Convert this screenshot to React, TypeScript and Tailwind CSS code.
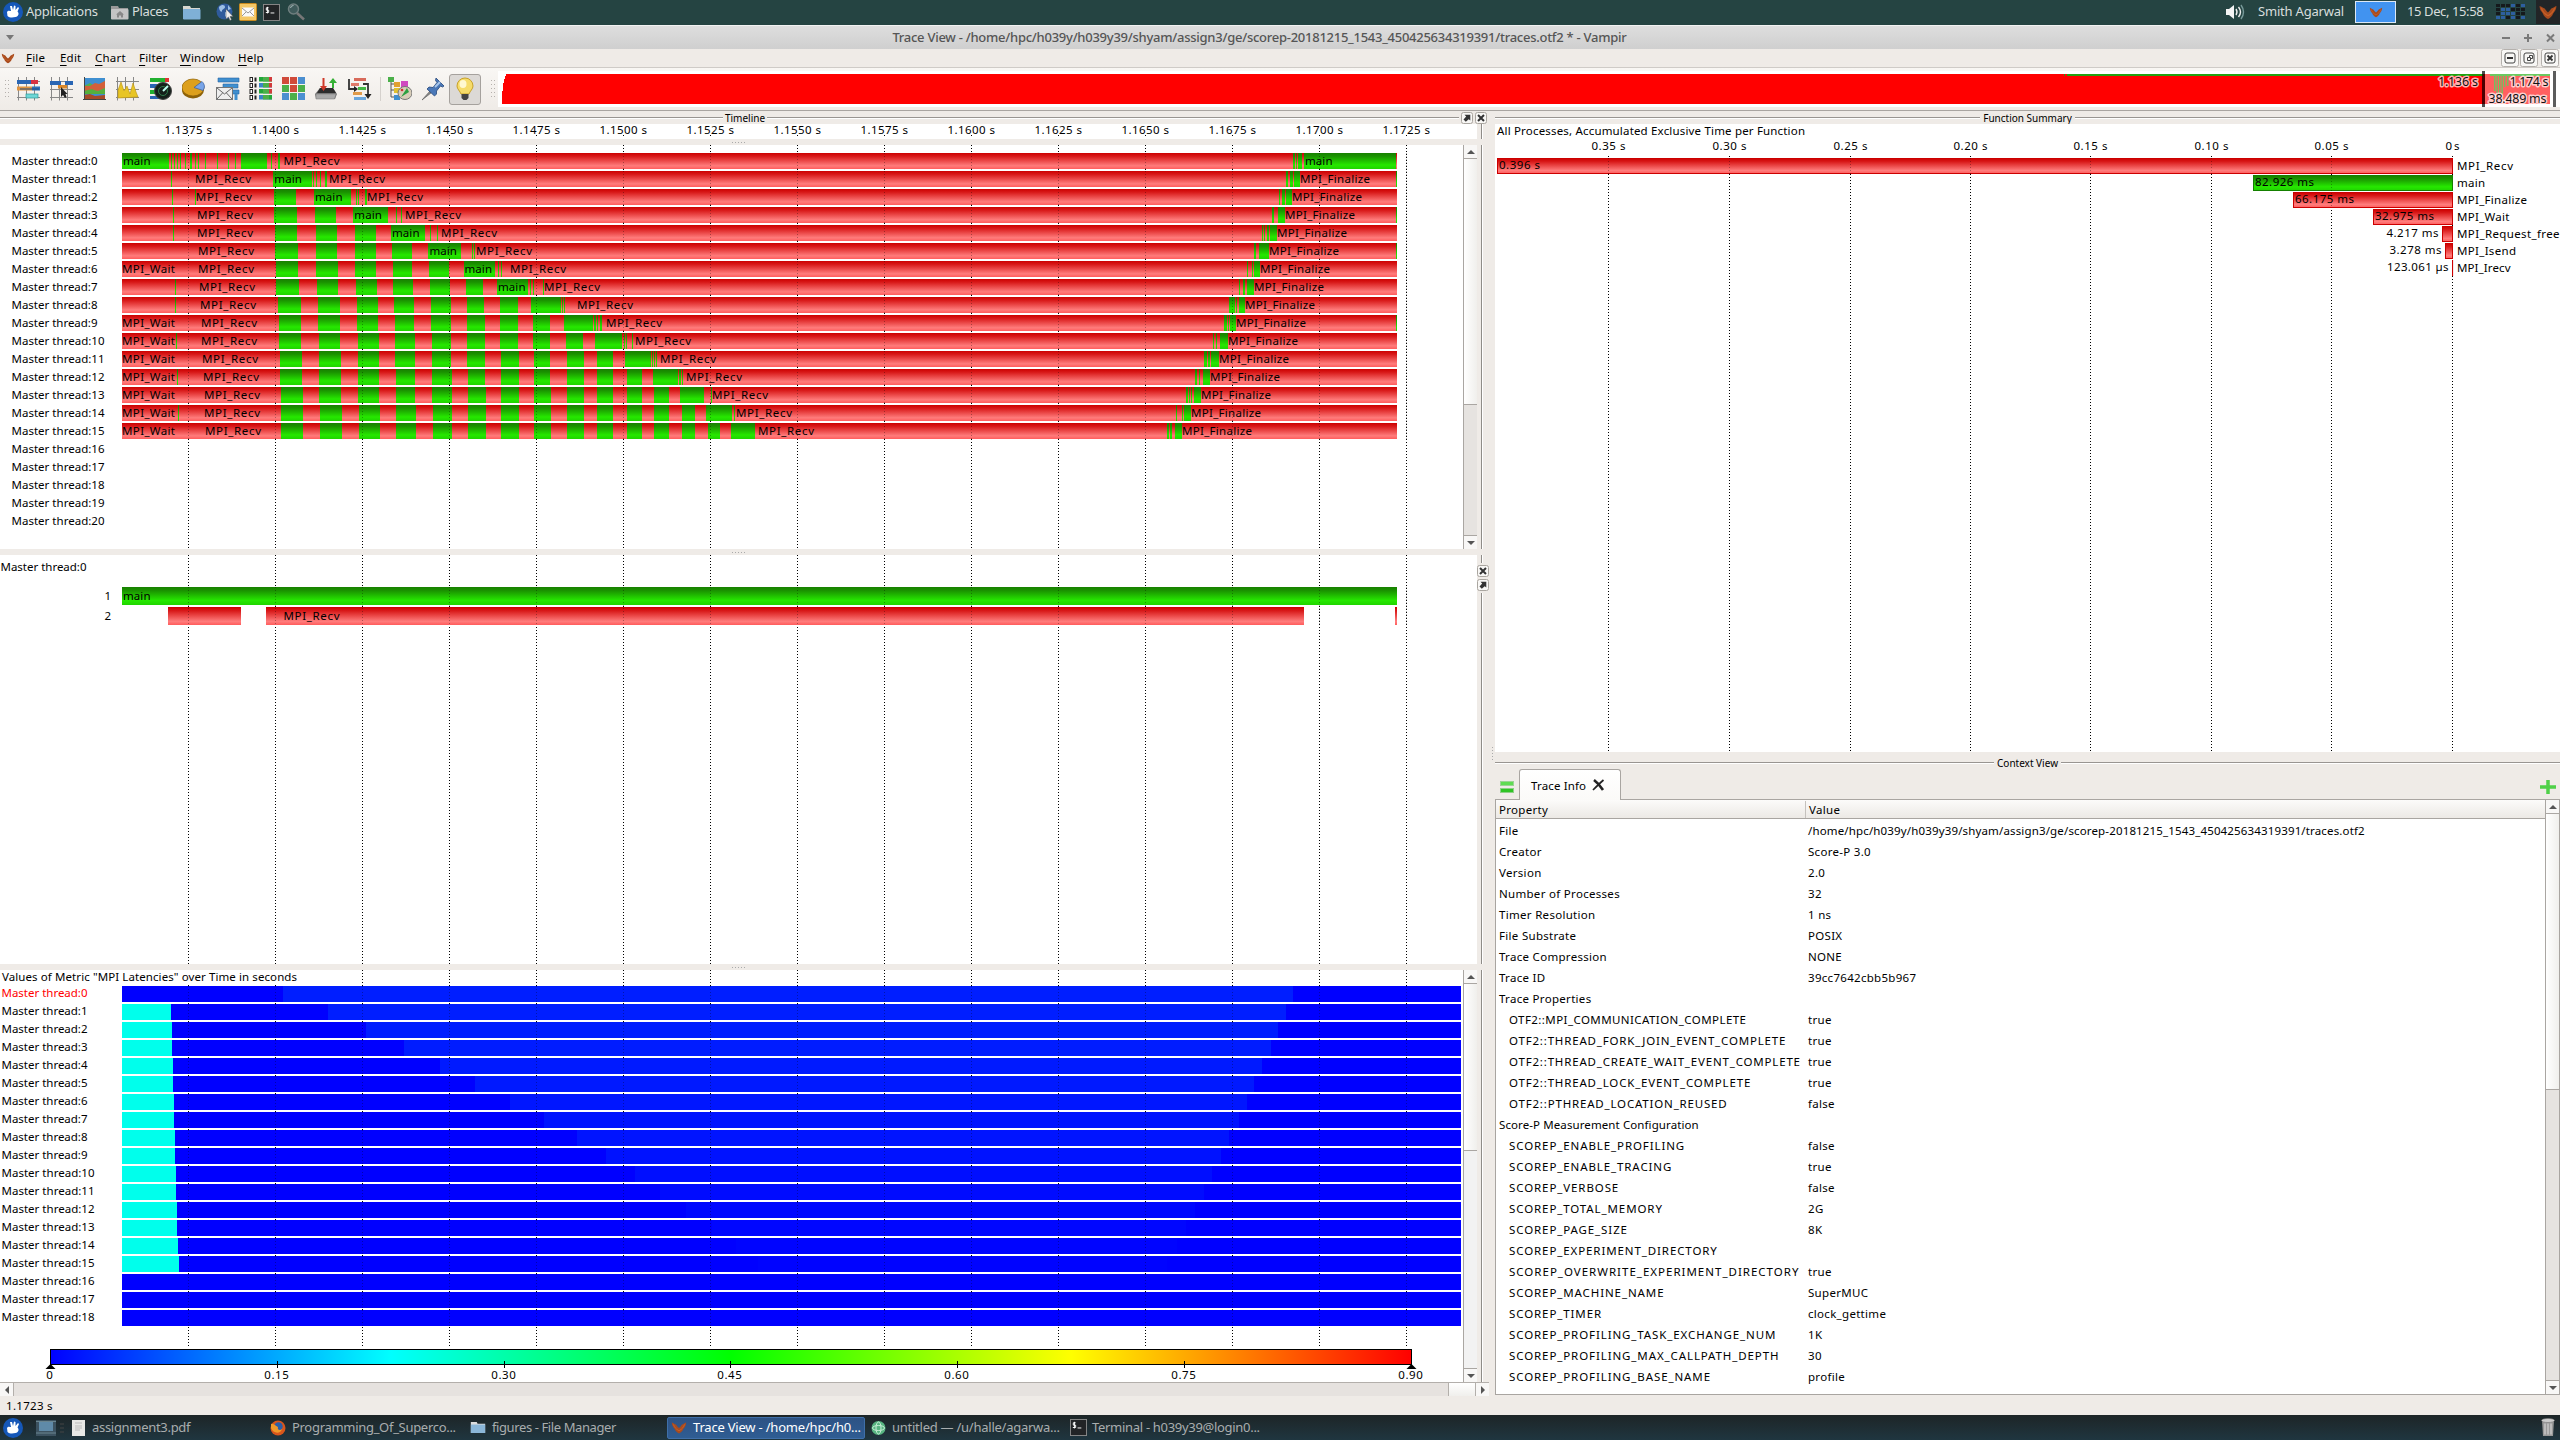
import React from 'react';

const UI = "font-['Noto_Sans',sans-serif]";
const GRID = Array.from({ length: 15 }, (_, i) => 188.5 + 87 * i);
const TIMES = Array.from({ length: 15 }, (_, i) => (1.1375 + 0.0025 * i).toFixed(4) + ' s');

type Span = [number, number];
type Mark = [number, string];

/* green spans and labels of every process row, in plot pixels */
const COLUMNS: [Span, Span][] = [
  [[273.5, 296], [281.5, 303.5]],
  [[315, 336], [320, 342]],
  [[354, 375], [359, 380]],
  [[391, 411], [396.5, 416]],
  [[428, 448], [433, 452.5]],
  [[464, 482], [468.5, 486]],
  [[499, 517], [501, 519]],
  [[531, 548], [534.5, 551]],
  [[565, 582], [567, 584]],
  [[596, 612], [597.5, 613]],
  [[625, 640], [627.5, 642]],
  [[654, 668], [654.5, 669]],
  [[681.5, 695], [681.5, 695.5]],
  [[707.5, 720], [707.5, 720]],
];

const MAIN: Span[] = [
  [122, 169], [273.3, 312], [314, 351], [353.3, 388], [391, 425], [428.4, 460.6], [463.5, 495], [497, 527.5],
  [531, 561.4], [564, 593.3], [595, 621.8], [625, 651], [653, 678], [680, 704], [706, 732.4], [731, 755],
];

const SLIVERS: Span[][] = [
  [[171, 172], [174, 175], [177, 178], [179.5, 181], [185, 186.2], [190, 192], [195, 196], [198, 199.3], [205, 206], [217, 218], [228, 229], [235, 236], [241.3, 267], [271, 272], [278, 280], [1293, 1295], [1296, 1297], [1298, 1302.3], [1304, 1395.5]],
  [[171, 172], [313, 314], [315.5, 316.5], [320, 321.2], [325, 327], [1286, 1288], [1290, 1293.3], [1294, 1299.7], [1396, 1397]],
  [[172, 173], [194.5, 196], [356, 357.2], [358.2, 359.3], [365, 367], [1279, 1280], [1282.3, 1285.3], [1286, 1291.7]],
  [[173, 174], [396, 397], [401, 402], [1272.3, 1274], [1278, 1284.7], [1396, 1397]],
  [[173, 174], [429.7, 430.6], [437, 438], [1262, 1263], [1264, 1265], [1267.3, 1269], [1270, 1277]],
  [[472, 473], [474, 475], [1254, 1255.7], [1259.3, 1269], [1396, 1397]],
  [[498, 499], [500.6, 501.6], [1247, 1248], [1252, 1253], [1253.7, 1259.7]],
  [[175, 176], [530, 531], [533, 534], [539.5, 540.3], [541.5, 542.3], [543, 544], [1239, 1240], [1243.3, 1245.3], [1247.3, 1253.7]],
  [[175, 176], [562, 563], [564, 565], [1229.3, 1235], [1236, 1237], [1239.3, 1245]],
  [[593.5, 595.5], [597, 598.2], [600, 601.5], [1224, 1227.3], [1228, 1229], [1230, 1235.7], [1396, 1397]],
  [[176, 177], [624, 625], [626, 627], [632, 633], [1213, 1214], [1216, 1217], [1220, 1227.7]],
  [[652, 653], [654, 655], [656, 657], [1204, 1207], [1208, 1210], [1211.3, 1219]],
  [[177, 178.3], [679.4, 680.5], [681.8, 683], [1195.3, 1197], [1199, 1200], [1203.3, 1210]],
  [[711, 712], [1186, 1188], [1189, 1190], [1191, 1192], [1194, 1201]],
  [[178, 179], [733.5, 734.5], [1176, 1177], [1182, 1183], [1183.7, 1191]],
  [[1167.3, 1169], [1170, 1171.7], [1175.3, 1181.7]],
];

const RECV1 = [0, 195, 195.8, 197, 197, 198, 198, 199, 200, 201, 201, 202, 203, 204, 204, 205];
const RECV2 = [283.5, 329, 367, 405, 441, 476, 510, 544, 577, 606, 635, 660, 686, 712, 736, 758];
const FINAL = [0, 1300, 1292, 1285, 1277, 1269, 1260, 1254, 1245, 1236, 1228, 1219, 1210, 1201, 1191, 1182];

function greens(row: number): Span[] {
  const spans: Span[] = [MAIN[row], ...SLIVERS[row]];
  const t = row >= 8 ? 0.6 + (row - 8) * 0.057 : Math.max(0, (row - 2) * 0.07);
  for (let c = 0; c < row - 1; c++) {
    const [a, b] = COLUMNS[c];
    spans.push([a[0] + (b[0] - a[0]) * t, a[1] + (b[1] - a[1]) * t]);
  }
  return spans;
}

function labels(row: number): Mark[] {
  if (row === 0) return [[123, 'main'], [283.5, 'MPI_Recv'], [1305, 'main']];
  const out: Mark[] = [[RECV1[row], 'MPI_Recv'], [RECV2[row], 'MPI_Recv'], [FINAL[row], 'MPI_Finalize']];
  if (row < 8) out.push([MAIN[row][0] + 1, 'main']);
  if (row === 6 || row > 8) out.push([122, 'MPI_Wait']);
  return out;
}

const LEN: Record<string, number> = { main: 27.5, MPI_Recv: 56, MPI_Finalize: 70, MPI_Wait: 53 };

function Label({ x, y, children, len, fill = '#000', anchor }: { x: number; y: number; children: string; len?: number; fill?: string; anchor?: 'middle' | 'end' }) {
  return (
    <text x={x} y={y} fontSize={11.5} fill={fill} textLength={len} textAnchor={anchor} className={UI}>
      {children}
    </text>
  );
}

function Dots({ y1, y2, xs = GRID, opacity = 1 }: { y1: number; y2: number; xs?: number[]; opacity?: number }) {
  return (
    <g opacity={opacity}>
      {xs.map((x) => (
        <line key={x} x1={x} x2={x} y1={y1} y2={y2} stroke="#000" strokeDasharray="1 2" />
      ))}
    </g>
  );
}

function Gradients() {
  return (
    <svg className="absolute size-0">
      <defs>
        <linearGradient id="red" x1="0" y1="0" x2="0" y2="1">
          <stop offset="0" stopColor="#cc0000" />
          <stop offset="0.2" stopColor="#d81818" />
          <stop offset="0.8" stopColor="#ff7c7c" />
          <stop offset="1" stopColor="#ff5c5c" />
        </linearGradient>
        <linearGradient id="green" x1="0" y1="0" x2="0" y2="1">
          <stop offset="0" stopColor="#178000" />
          <stop offset="0.2" stopColor="#1a9200" />
          <stop offset="0.75" stopColor="#26e800" />
          <stop offset="1" stopColor="#20d400" />
        </linearGradient>
        <linearGradient id="rainbow">
          <stop offset="0" stopColor="#0000ff" />
          <stop offset="0.25" stopColor="#00ffff" />
          <stop offset="0.5" stopColor="#00ff00" />
          <stop offset="0.75" stopColor="#ffff00" />
          <stop offset="1" stopColor="#ff0000" />
        </linearGradient>
      </defs>
    </svg>
  );
}

function Ruler() {
  return (
    <svg className="h-[15px] w-[1477px] bg-white" viewBox="0 124 1477 15">
      <Dots y1={135} y2={138} />
      {TIMES.map((t, i) => (
        <Label key={t} x={GRID[i] - 0.3} y={134.3} len={47.5} anchor="middle">{t}</Label>
      ))}
    </svg>
  );
}

function MasterTimeline() {
  return (
    <svg className="h-[404px] w-[1463px] bg-white" viewBox="0 145 1463 404">
      <Dots y1={145} y2={549} />
      {Array.from({ length: 21 }, (_, r) => (
        <Label key={r} x={11.5} y={165 + 18 * r} len={r > 9 ? 93 : 86}>{`Master thread:${r}`}</Label>
      ))}
      <g shapeRendering="crispEdges">
        {Array.from({ length: 16 }, (_, r) => (
          <g key={r}>
            <rect x={122} y={153 + 18 * r} width={1275} height={16} fill="url(#red)" />
            {greens(r).map(([a, b], i) => (
              <rect key={i} x={a} y={153 + 18 * r} width={b - a} height={16} fill="url(#green)" />
            ))}
          </g>
        ))}
      </g>
      <Dots y1={153} y2={440} opacity={0.3} />
      {Array.from({ length: 16 }, (_, r) =>
        labels(r).map(([x, s], i) => (
          <Label key={`${r}-${i}`} x={x} y={164.5 + 18 * r} len={LEN[s]}>{s}</Label>
        )),
      )}
    </svg>
  );
}

function ProcessTimeline() {
  return (
    <svg className="h-[409px] w-[1477px] bg-white" viewBox="0 555 1477 409">
      <Dots y1={555} y2={964} />
      <Label x={0.5} y={570.5} len={86}>Master thread:0</Label>
      <Label x={104.5} y={600}>1</Label>
      <Label x={104.5} y={620}>2</Label>
      <g shapeRendering="crispEdges">
        <rect x={122} y={587} width={1275} height={18} fill="url(#green)" />
        <rect x={168} y={607} width={73} height={18} fill="url(#red)" />
        <rect x={266} y={607} width={1038} height={18} fill="url(#red)" />
        <rect x={1395} y={607} width={2} height={18} fill="url(#red)" />
      </g>
      <Dots y1={587} y2={625} opacity={0.3} />
      <Label x={123} y={600} len={27.5}>main</Label>
      <Label x={283.5} y={620} len={56}>MPI_Recv</Label>
    </svg>
  );
}

const LATENCY_START = [283, 328, 366, 404, 440, 475, 510, 544, 577, 606, 635, 660, 686, 712, 736, 758];
const LATENCY_END = [1293, 1286, 1278, 1271, 1262, 1254, 1247, 1239, 1229, 1221, 1212, 1204, 1195, 1186, 1177, 1167];
const LATENCY_FILL = ['#001eff', '#001eff', '#001eff', '#001cff', '#001aff', '#0019ff', '#0016ff', '#0014ff', '#0014ff', '#0012ff', '#000eff', '#000bff', '#0008ff', '#0006ff', '#0004ff', '#0003ff'];

function MetricChart() {
  return (
    <svg className="h-[412px] w-[1463px] bg-white" viewBox="0 970 1463 412">
      <Dots y1={970} y2={1348} />
      <rect x={0} y={970} width={299} height={15} fill="#fff" />
      <Label x={2} y={980.5} len={295}>Values of Metric "MPI Latencies" over Time in seconds</Label>
      {Array.from({ length: 19 }, (_, r) => (
        <Label key={r} x={1.5} y={997.2 + 18 * r} len={r > 9 ? 93 : 86} fill={r === 0 ? '#ff0000' : '#000'}>{`Master thread:${r}`}</Label>
      ))}
      <g shapeRendering="crispEdges">
        {Array.from({ length: 19 }, (_, r) => (
          <g key={r}>
            <rect x={122} y={986 + 18 * r} width={1339} height={16} fill="#0000ff" />
            {r > 0 && r < 16 && <rect x={122} y={986 + 18 * r} width={49 + Math.floor(r / 2) + (r === 15 ? 1 : 0)} height={16} fill="#00ffec" />}
            {r < 16 && <rect x={LATENCY_START[r]} y={986 + 18 * r} width={LATENCY_END[r] - LATENCY_START[r]} height={16} fill={LATENCY_FILL[r]} />}
          </g>
        ))}
      </g>
      <Dots y1={986} y2={1326} opacity={0.3} />
      <rect x={50.5} y={1349.5} width={1361} height={15} fill="url(#rainbow)" stroke="#000" />
      {[0, 1, 2, 3, 4, 5, 6].map((i) => {
        const x = 50.5 + Math.round(226.8 * i);
        const edge = i === 0 || i === 6;
        return (
          <g key={i}>
            {edge ? <path d={`M${x} 1364l5 5h-10z`} fill="#000" /> : <line x1={x} x2={x} y1={1361} y2={1368} stroke="#000" />}
            <Label x={x - 1} y={1378.5} anchor="middle" len={i ? 24.5 : undefined}>{i ? (0.15 * i).toFixed(2) : '0'}</Label>
          </g>
        );
      })}
    </svg>
  );
}

const FUNCS: [number, string, string, number, number][] = [
  [1497, '0.396 s', 'MPI_Recv', 41, 56],
  [2253, '82.926 ms', 'main', 59, 28],
  [2293, '66.175 ms', 'MPI_Finalize', 59, 70],
  [2373, '32.975 ms', 'MPI_Wait', 59, 52.5],
  [2442, '4.217 ms', 'MPI_Request_free', 52, 102.5],
  [2445, '3.278 ms', 'MPI_Isend', 52, 59],
  [2452, '123.061 µs', 'MPI_Irecv', 61.5, 53.5],
];

function FunctionSummary() {
  const xs = [1608.5, 1729.5, 1850.5, 1970.5, 2090.5, 2211.5, 2331.5, 2452.5];
  const names = ['0.35 s', '0.30 s', '0.25 s', '0.20 s', '0.15 s', '0.10 s', '0.05 s', '0s'];
  return (
    <svg className="h-[628px] w-[1065px] bg-white" viewBox="1495 124 1065 628">
      <Label x={1497} y={134.5} len={308}>All Processes, Accumulated Exclusive Time per Function</Label>
      {xs.map((x, i) => (
        <Label key={x} x={x} y={150.3} anchor="middle" len={i < 7 ? 34 : 14}>{names[i]}</Label>
      ))}
      <Dots xs={xs} y1={156} y2={752} />
      {FUNCS.map(([x, , name], i) => (
        <rect key={name} x={x + 0.5} y={158.5 + 17 * i} width={Math.max(0.1, 2452 - x)} height={15} fill={i === 1 ? 'url(#green)' : 'url(#red)'} stroke={i === 1 ? '#158000' : '#cc0000'} />
      ))}
      <Dots xs={xs.slice(0, 7)} y1={158} y2={174} opacity={0.3} />
      <Dots xs={[2331.5]} y1={175} y2={208} opacity={0.3} />
      {FUNCS.map(([x, value, name, vl, nl], i) => (
        <g key={name}>
          <Label x={i < 4 ? x + 2 : x - 3.5} y={168.5 + 17 * i} len={vl} anchor={i < 4 ? undefined : 'end'}>{value}</Label>
          <Label x={2457} y={169.5 + 17 * i} len={nl}>{name}</Label>
        </g>
      ))}
    </svg>
  );
}

function Arrow({ dir }: { dir: 'up' | 'down' | 'left' | 'right' }) {
  const d = { up: 'M0 4h8L4 0z', down: 'M0 0h8L4 4z', left: 'M4 0v8L0 4z', right: 'M0 0v8l4-4z' }[dir];
  return (
    <svg width={dir === 'up' || dir === 'down' ? 8 : 4} height={dir === 'up' || dir === 'down' ? 4 : 8}>
      <path d={d} fill="#555" />
    </svg>
  );
}

function VScroll({ height, thumb, trough = 'bg-[#e6e3e0]' }: { height: string; thumb: string; trough?: string }) {
  return (
    <div className={`flex w-[14px] shrink-0 flex-col border-l border-[#aaa6a2] ${height} ${trough}`}>
      <div className="flex h-[14px] shrink-0 items-center justify-center border-b border-[#aaa6a2] bg-[#f8f7f6]"><Arrow dir="up" /></div>
      <div className={`shrink-0 border-b border-[#aaa6a2] bg-gradient-to-r from-white to-[#f0efec] ${thumb}`} />
      <div className="grow" />
      <div className="flex h-[14px] shrink-0 items-center justify-center border-t border-[#aaa6a2] bg-[#f8f7f6]"><Arrow dir="down" /></div>
    </div>
  );
}

function Separator() {
  return (
    <div className="flex h-[6px] w-[1477px] items-center justify-center gap-[2px]">
      {[0, 1, 2, 3, 4].map((i) => <i key={i} className="size-px bg-[#aaa]" />)}
    </div>
  );
}

function DockButton({ kind }: { kind: 'x' | 'float' }) {
  return (
    <svg width="12" height="12" viewBox="0 0 12 12" className="shrink-0">
      <rect x="0.5" y="0.5" width="11" height="11" rx="2" fill="#f8f7f5" stroke="#aaa6a0" />
      {kind === 'x' ? <path d="M3 3l6 6M9 3L3 9" stroke="#333" strokeWidth="2" /> : <path d="M3.500 2.700h5.800v5.800L7.700 7.200 4.800 9.800 2.500 7.600 5.200 4.600z" fill="#333" />}
    </svg>
  );
}

function Rule() {
  return <div className="h-[2px] grow border-t border-[#999591] bg-white" />;
}

function Owl({ className }: { className?: string }) {
  return (
    <svg viewBox="0 0 20 16" className={className}>
      <path d="M1 1c1 0 3 2 5 2.500c1 .5 1.500 2.500 4 4.500c2.500-2 3-4 4-4.500c2-.5 4-2.500 5-2.500c0 4-2 6-3.500 8c-1 3-3.500 5-5.500 6c-2-1-4.500-3-5.500-6c-1.500-2-3.500-4-3.500-8z" fill="#a84b1e" />
      <path d="M3 3.500c1 3 3 6 7 8c4-2 6-5 7-8" fill="none" stroke="#c65f28" strokeWidth="1.200" />
    </svg>
  );
}

function MouseLogo() {
  return (
    <svg viewBox="0 0 20 20" className="size-5">
      <circle cx="10" cy="10" r="10" fill="#1557b8" />
      <path d="M4 10c1-2 3-1 4-1l-1-5 2 0 1 4 1-4.500 1.500.5v4l2.500-3 1 1-1.500 3.500c2 2 1 5-2 5.500-3 .8-6 .8-8-1z" fill="#fff" />
    </svg>
  );
}

function Folder({ home }: { home?: boolean }) {
  return (
    <svg viewBox="0 0 19 15" className="h-[15px] w-[19px]">
      <path d="M1 1h7l1 2h9v11H1z" fill={home ? '#999' : '#d8d8d0'} />
      <rect x="1" y="4" width="17.500" height="10.500" rx="1" fill={home ? '#c4c4c4' : '#7fb0d6'} />
      {home && <path d="M10 6l4 3.500h-1V12.500h-2V10.500H9v2H7V9.500H6z" fill="#888" />}
    </svg>
  );
}

function TermIcon() {
  return (
    <svg viewBox="0 0 18 18" className="size-[17px]">
      <rect x="0.5" y="0.5" width="17" height="17" fill="#222426" stroke="#8a8a8a" />
      <path d="M6 4H3.500v2.500H6V9H3M4.700 3v7" stroke="#fff" fill="none" />
      <path d="M8 9.500h4" stroke="#fff" />
    </svg>
  );
}

function TopPanel() {
  return (
    <div className="flex h-[25px] shrink-0 items-center bg-[#254442] pb-px text-[13px] tracking-[-0.25px] text-[#d8dedd]">
      <div className="ml-[3px] w-[23px]"><MouseLogo /></div>
      <span className="w-[84px]">Applications</span>
      <div className="w-[22px]"><Folder home /></div>
      <span className="w-[50px] tracking-[-0.35px]">Places</span>
      <div className="w-[34px]"><Folder /></div>
      <svg viewBox="0 0 18 18" className="mr-[5px] size-[18px]">
        <circle cx="8.500" cy="8.500" r="8" fill="#2f5b9c" />
        <path d="M3 4c3-3 6-2 6 0s-3 2-3 4-3 0-3-4zM9 9l4 1-2 5-2-2zM12 2l3 4-3 1z" fill="#9dc0e6" />
        <path d="M10 6v10l2.500-2 1.500 3.500 1.500-1-1.500-3h3z" fill="#eee" stroke="#555" strokeWidth=".5" />
      </svg>
      <svg viewBox="0 0 18 18" className="mr-[6px] size-[18px]">
        <rect x=".5" y=".5" width="17" height="17" rx="1" fill="#f3c766" stroke="#c98a1e" />
        <rect x="3" y="4.500" width="12" height="9" fill="#fafafa" />
        <path d="M3 5l6 5 6-5M3 13l4-4M15 13l-4-4" stroke="#999" fill="none" />
      </svg>
      <TermIcon />
      <svg viewBox="0 0 18 18" className="ml-[7px] size-[18px]">
        <path d="M10 10l7 6.500" stroke="#777" strokeWidth="2.500" />
        <circle cx="6.500" cy="6" r="5" fill="#3f5b5b" stroke="#6f7f7f" strokeWidth="1.500" />
        <path d="M3.500 5a3 3 0 013-2.500" stroke="#aabcbc" fill="none" />
      </svg>
      <div className="grow" />
      <svg viewBox="0 0 20 16" className="mr-[2px] h-4 w-5">
        <path d="M1 5h3l5-4v14l-5-4H1z" fill="#f4f4f4" />
        <path d="M11 5q2 3 0 6M13.500 3q4 5 0 10" stroke="#eee" strokeWidth="1.400" fill="none" />
        <path d="M16 1q5 7 0 14" stroke="#799" strokeWidth="1.400" fill="none" />
      </svg>
      <span className="ml-[11px] w-[97px] tracking-[-0.2px]">Smith Agarwal</span>
      <div className="flex h-[22px] w-[41px] items-center justify-center border border-[#dce8f5] bg-[#4193f0]"><Owl className="h-[11px] w-[16px]" /></div>
      <span className="ml-[11px] w-[89px] tracking-[-0.4px]">15 Dec, 15:58</span>
      <svg viewBox="0 0 30 16" className="h-4 w-[30px]">
        {Array.from({ length: 24 }, (_, i) => (
          <rect key={i} x={(i % 6) * 5} y={Math.floor(i / 6) * 4} width="4" height="3" fill={[3, 5, 7, 8, 13, 14, 15, 18, 19, 21, 23].includes(i) ? '#2d5f9f' : '#15191c'} />
        ))}
      </svg>
      <div className="ml-[10px] flex h-[24px] w-[24px] items-center justify-center bg-[#222527]"><Owl className="h-[15px] w-[20px]" /></div>
    </div>
  );
}

function TitleBar() {
  return (
    <div className="flex h-[24px] shrink-0 items-center border-t border-[#f2f2f2] bg-gradient-to-b from-[#dedede] to-[#cfcfcf] pl-[6px] pr-[5px] text-[13px] font-medium tracking-[-0.260px] text-[#555]">
      <svg width="8" height="5"><path d="M0 0h8L4 5z" fill="#777" /></svg>
      <span className="grow pl-[4px] pt-px text-center whitespace-nowrap">Trace View - /home/hpc/h039y/h039y39/shyam/assign3/ge/scorep-20181215_1543_450425634319391/traces.otf2 * - Vampir</span>
      <svg width="54" height="10">
        <path d="M1 5h8M23 5h8M27 1v8" stroke="#7a7a7a" strokeWidth="2" />
        <path d="M46 1.500l7 7M53 1.500l-7 7" stroke="#7a7a7a" strokeWidth="2" />
      </svg>
    </div>
  );
}

const MENU: [string, string][] = [
  ['File', 'w-[34px]'], ['Edit', 'w-[35px]'], ['Chart', 'w-[44px]'], ['Filter', 'w-[41px]'], ['Window', 'w-[58px]'], ['Help', 'w-[40px]'],
];

function MenuBar() {
  return (
    <div className="flex h-[19px] shrink-0 items-center border-b border-[#cfcbc7] bg-[#efebe7] text-[11.500px] leading-[16px] tracking-[0.2px]">
      <Owl className="mr-[10px] h-[11px] w-[16px]" />
      {MENU.map(([m, w]) => (
        <span key={m} className={`pb-px ${w}`}><span className="underline underline-offset-[3px]">{m[0]}</span>{m.slice(1)}</span>
      ))}
      <div className="grow" />
      <svg width="58" height="18" viewBox="0 0 58 18" className="mr-px">
        {[0, 19, 40].map((x) => (
          <g key={x} fill="none">
            <rect x={x + 0.5} y="0.500" width="17" height="17" rx="2" fill="#f8f7f5" stroke="#b5b1ad" />
            <rect x={x + 4} y="4" width="10" height="10" rx="2" stroke="#444" />
          </g>
        ))}
        <path d="M6 9h6M46.500 6.500l5 5M51.500 6.500l-5 5" stroke="#333" strokeWidth="1.800" />
        <path d="M26.500 8.500h3v3h-3zM28.500 8.500v-2h3v3h-2" stroke="#444" fill="none" />
      </svg>
    </div>
  );
}

const axes = <path d="M1.500 0v23.500M9.500 0v23.500M17.500 0v23.500M0 4.500h23M0 12.500h23M0 20.500h23" stroke="#888" strokeWidth="1" fill="none" />;

const TOOL_ICONS: React.ReactNode[] = [
  <>{axes}<rect x="0" y="3" width="14" height="4" fill="#2a66b4" /><rect x="14" y="3" width="7" height="4" fill="#d83040" /><rect x="0" y="9.500" width="15" height="4" fill="#e09440" /><rect x="15" y="9.500" width="8" height="4" fill="#2f6fb8" /><path d="M3 12h19" stroke="#234c80" /><rect x="9" y="17" width="12" height="4" fill="#6fd6d6" stroke="#2a9a9a" strokeWidth=".7" /></>,
  <>{axes}<rect x="0" y="4" width="11" height="4" fill="#2a66b4" /><rect x="15" y="4" width="8" height="4" fill="#2a66b4" /><rect x="8" y="8" width="9" height="3.500" fill="#d8872a" /><path d="M11 10v10l2-2 2 3 1.500-1-1-3h2z" fill="#222" /></>,
  <><rect x="1" y="1" width="21" height="21" fill="#3f8fd0" /><path d="M1 9l6-3 6 4 9-6v12H1z" fill="#55b04c" /><path d="M1 9l6 0 5-3 4 1 6-3v7l-7 3-5-1-9 4z" fill="#d2603a" /><path d="M1 14l8-2 6 3 7-3v5H1z" fill="#55b03c" /><path d="M1 18l6-1 5 2 10-1v4H1z" fill="#a84a28" /><path d="M1.500 0v23M0 22.500h23" stroke="#444" /></>,
  <>{axes}<path d="M2 21V13l3-8 3 9 3-5 3 8 3-11 3 9 2 5z" fill="#e8c525" stroke="#b8900e" strokeWidth=".6" /></>,
  <><rect x="1" y="1" width="19" height="4" fill="#22b030" /><rect x="16" y="1" width="4" height="4" fill="#d33" /><rect x="1" y="7" width="10" height="4" fill="#2a66b4" /><rect x="1" y="13" width="10" height="4" fill="#22b030" /><rect x="1" y="19" width="10" height="3" fill="#2a66b4" /><circle cx="14" cy="14" r="8.500" fill="#15201a" stroke="#444" /><circle cx="14" cy="14" r="4.500" fill="none" stroke="#2f7a4a" /><path d="M14 14l5-5" stroke="#bfe" strokeWidth="2" /></>,
  <><ellipse cx="11" cy="13" rx="11" ry="8.500" fill="#8d6208" /><ellipse cx="11" cy="10.500" rx="11" ry="8.500" fill="#dda01c" stroke="#8d6208" strokeWidth=".7" /><path d="M12 10.500l8-6c3 3 3 6 1 9z" fill="#79a5e8" stroke="#345a9c" strokeWidth=".7" /></>,
  <><path d="M2 1h21v4H2zM7 7h15v4H7zM14 13h9v4h-9z" fill="#3f8fcf" stroke="#2a66a4" strokeWidth=".6" /><path d="M20 17v6" stroke="#3f8fcf" strokeWidth="3" /><rect x="0.500" y="10.500" width="16" height="12" fill="#eee" stroke="#777" /><path d="M1 11l7.500 6 7.500-6M1 22l5.500-6M16 22l-5.500-6" stroke="#666" fill="none" /></>,
  <>{[0, 6, 12, 18].map((y) => <g key={y}><rect x="1" y={y + 0.5} width="2.500" height="4" fill="#fff" stroke="#222" /><rect x="5.500" y={y + 0.5} width="2" height="4" fill="#222" /><rect x="10" y={y} width="13" height="4.500" fill={y === 6 || y === 18 ? '#3a85c8' : '#22a83a'} /><rect x="14" y={y} width="6" height="4.500" fill="#4bb04a" /><rect x="20" y={y} width="3" height="4.500" fill={y === 18 ? '#22a83a' : '#d23a3a'} /></g>)}</>,
  <>{Array.from({ length: 9 }, (_, i) => <rect key={i} x={(i % 3) * 8} y={Math.floor(i / 3) * 8} width="7" height="7" fill={['#d04a3a', '#d04a3a', '#4b8fd0', '#4bb04a', '#d04a3a', '#4bb04a', '#4b8fd0', '#4bb04a', '#4b8fd0'][i]} />)}</>,
  <><path d="M5 11h13l4 6-2 5H1l-1-5z" fill="#777" /><path d="M5 11h13l3 5H2z" fill="#2c2c2c" /><path d="M1 17h20l-1.500 5H1z" fill="#aaa" stroke="#777" strokeWidth=".5" /><path d="M7.500 1h2v8h2.500l-3.500 5L5 9h2.500z" fill="#cf3a2a" /><path d="M17 11V6h-3l4-5 4 5h-3v5z" fill="#35b035" /></>,
  <><path d="M6 1h12v3H6z" fill="#d86a5a" /><path d="M3 6h8v3H3z" fill="#e07a6a" /><path d="M10 10h8v3h-8z" fill="#45b845" /><path d="M5 15h9v3H5z" fill="#e09a4a" /><path d="M6 20h12v3H6z" fill="#6aa6dc" /><path d="M1 2v10h6M15 7h5v13" stroke="#333" strokeWidth="1.800" fill="none" /><path d="M6 9l4 3-4 3zM16.500 17h7L20 22z" fill="#222" /></>,
];

function Toolbar() {
  return (
    <div className="flex h-[43px] shrink-0 items-center border-b border-[#a9a5a1] bg-gradient-to-b from-[#f9f7f4] to-[#efebe7]">
      <Grip />
      <div className="ml-[7px] flex items-center gap-[9.100px]">
        {TOOL_ICONS.map((icon, i) => (
          <svg key={i} width="24" height="24" viewBox="0 0 24 24">{icon}</svg>
        ))}
      </div>
      <div className="ml-[8px] h-[24px] w-px bg-[#d5d1cd]" />
      <svg width="24" height="24" viewBox="0 0 24 24" className="ml-[7px]">
        <path d="M3 2v18M3 7h4M3 13h4M3 20h4" stroke="#555" />
        <rect x="0" y="0" width="6" height="5" fill="#4bb04a" /><rect x="6" y="5" width="6" height="5" fill="#e0a030" /><rect x="6" y="11" width="6" height="5" fill="#e0c030" /><rect x="6" y="18" width="6" height="5" fill="#3f8fd0" /><rect x="13" y="4" width="7" height="6" fill="#d04ac0" />
        <ellipse cx="17" cy="16" rx="7" ry="6.500" fill="#d8cdb8" stroke="#777" /><path d="M13 20l6-9 2 4z" fill="#2aa040" /><circle cx="14" cy="13" r="1.300" fill="#c33" />
      </svg>
      <svg width="24" height="24" viewBox="0 0 24 24" className="ml-[10px]">
        <path d="M0 23l8-9 1 2z" fill="#888" stroke="#555" strokeWidth=".6" />
        <path d="M14 1l8 8-1.500 1-2-1-4 5v3l-2 2L5 12l2-2 4 .5 4-5-1.500-2z" fill="#4a78b8" stroke="#27477a" strokeWidth=".8" />
        <path d="M13 10l5-5" stroke="#a8c6ea" strokeWidth="2" />
      </svg>
      <div className="ml-[3px] flex h-[31px] w-[32px] items-center justify-center rounded-[3px] border border-[#a5a19d] bg-[#dcd9d6]">
        <svg width="18" height="24" viewBox="0 0 18 24">
          <path d="M9 1a8 8 0 00-8 8c0 3 3 5 4 8h8c1-3 4-5 4-8a8 8 0 00-8-8z" fill="#f6dc6a" stroke="#c8a22a" />
          <ellipse cx="7" cy="7" rx="3.500" ry="4" fill="#fff8d0" />
          <path d="M5.500 17h7v4l-2 2h-3l-2-2z" fill="#444" />
        </svg>
      </div>
      <div className="ml-[5px] w-[12px]"><Grip /></div>
      <Overview />
    </div>
  );
}

function Grip() {
  return (
    <svg width="10" height="18" viewBox="0 0 10 18">
      {Array.from({ length: 5 }, (_, i) => <path key={i} d={`M5 ${i * 4 + 0.5}h1M8 ${i * 4 + 0.5}h1`} stroke="#b5b1ad" />)}
    </svg>
  );
}

function Overview() {
  return (
    <svg className="h-[36px] w-[2062px] shrink-0 bg-white" viewBox="498 72 2062 36">
      <path d="M502 105V92h1V84h1V80h1V77h1V75H2550V105z" fill="#f00" shapeRendering="crispEdges" />
      <path d="M2064 75h1v2h-1zM2067 75H2483v2H2067z" fill="#22a010" />
      <rect x="2485" y="75" width="65" height="30" fill="#ff6060" />
      <path d="M2490 76h60" stroke="#6cc860" strokeWidth="2" />
      {[2494, 2496.500, 2499, 2501.500, 2504, 2507].map((x, i) => <rect key={x} x={x} y="77" width="1.400" height={[15, 17, 19, 18, 11, 10][i]} fill="#74c060" />)}
      <rect x="2482" y="72" width="3" height="36" fill="#000" opacity=".7" />
      <rect x="2553" y="72" width="3" height="36" fill="#5c5c5c" />
      <g fontSize="12.500" className={UI} fill="#111" stroke="#fff" strokeOpacity=".7" strokeWidth="3" strokeLinejoin="round" paintOrder="stroke">
        <text x="2438" y="86.500" textLength="40">1.136 s</text>
        <text x="2509.500" y="86.500" textLength="39">1.174 s</text>
        <text x="2488.500" y="103.500" textLength="58">38.489 ms</text>
      </g>
    </svg>
  );
}

function LeftDock() {
  return (
    <div className="flex w-[1495px] shrink-0 flex-col">
      <div className="flex h-[13px] items-center">
        <Rule /><span className="w-[44px] pt-[1px] text-center text-[10px] leading-[12px]">Timeline</span><div className="flex w-[692px] items-center"><Rule /></div>
        <div className="flex w-[36px] gap-[2px] pl-[2px]"><DockButton kind="float" /><DockButton kind="x" /></div>
      </div>
      <div className="flex">
        <div className="flex w-[1477px] shrink-0 flex-col">
          <Ruler />
          <Separator />
          <div className="flex"><MasterTimeline /><VScroll height="h-[404px]" thumb="h-[246px]" /></div>
          <Separator />
          <ProcessTimeline />
          <Separator />
          <div className="flex"><MetricChart /><VScroll height="h-[412px]" thumb="h-[167px]" trough="bg-[#f2f2f2]" /></div>
        </div>
        <div className="flex flex-col">
          <div className="ml-[4px] h-[15px] w-[2px] border-l border-[#8f8c88] bg-white" />
          <div className="ml-[4px] mt-[6px] h-[404px] w-[2px] border-l border-[#8f8c88] bg-white" />
          <div className="ml-[4px] mt-[6px] h-[8px] w-[2px] border-l border-[#8f8c88] bg-white" />
          <div className="flex flex-col gap-[2px] py-[2px]"><DockButton kind="x" /><DockButton kind="float" /></div>
          <div className="ml-[4px] h-[371px] w-[2px] border-l border-[#8f8c88] bg-white" />
          <div className="ml-[4px] mt-[6px] h-[412px] w-[2px] border-l border-[#8f8c88] bg-white" />
        </div>
        <div className="flex grow flex-col items-center justify-center gap-[2px]">
          {[0, 1, 2, 3, 4].map((i) => <i key={i} className="size-px bg-[#aaa]" />)}
        </div>
      </div>
      <div className="flex h-[14px] w-[1489px] border-t border-[#b3afab] bg-[#e6e2df]">
        <div className="flex w-[14px] items-center justify-center border-r border-[#b3afab] bg-[#f8f7f6]"><Arrow dir="left" /></div>
        <div className="grow" />
        <div className="w-[28px] border-x border-[#b3afab] bg-gradient-to-b from-white to-[#f0efec]" />
        <div className="flex w-[13px] items-center justify-center bg-[#f8f7f6]"><Arrow dir="right" /></div>
      </div>
    </div>
  );
}

const PROPS: [string, string][] = [
  ['File', '/home/hpc/h039y/h039y39/shyam/assign3/ge/scorep-20181215_1543_450425634319391/traces.otf2'],
  ['Creator', 'Score-P 3.0'],
  ['Version', '2.0'],
  ['Number of Processes', '32'],
  ['Timer Resolution', '1 ns'],
  ['File Substrate', 'POSIX'],
  ['Trace Compression', 'NONE'],
  ['Trace ID', '39cc7642cbb5b967'],
  ['Trace Properties', ''],
  ['OTF2::MPI_COMMUNICATION_COMPLETE', 'true'],
  ['OTF2::THREAD_FORK_JOIN_EVENT_COMPLETE', 'true'],
  ['OTF2::THREAD_CREATE_WAIT_EVENT_COMPLETE', 'true'],
  ['OTF2::THREAD_LOCK_EVENT_COMPLETE', 'true'],
  ['OTF2::PTHREAD_LOCATION_REUSED', 'false'],
  ['Score-P Measurement Configuration', ''],
  ['SCOREP_ENABLE_PROFILING', 'false'],
  ['SCOREP_ENABLE_TRACING', 'true'],
  ['SCOREP_VERBOSE', 'false'],
  ['SCOREP_TOTAL_MEMORY', '2G'],
  ['SCOREP_PAGE_SIZE', '8K'],
  ['SCOREP_EXPERIMENT_DIRECTORY', ''],
  ['SCOREP_OVERWRITE_EXPERIMENT_DIRECTORY', 'true'],
  ['SCOREP_MACHINE_NAME', 'SuperMUC'],
  ['SCOREP_TIMER', 'clock_gettime'],
  ['SCOREP_PROFILING_TASK_EXCHANGE_NUM', '1K'],
  ['SCOREP_PROFILING_MAX_CALLPATH_DEPTH', '30'],
  ['SCOREP_PROFILING_BASE_NAME', 'profile'],
  ['SCOREP_PROFILING_FORMAT', 'default'],
];

function keyClass(k: string) {
  if (k.startsWith('OTF2::MPI')) return 'w-[312px] pl-[13px] tracking-[0.430px]';
  if (k.startsWith('OTF2')) return 'w-[312px] pl-[13px] tracking-[0.820px]';
  if (k.startsWith('SCOREP_OVER')) return 'w-[312px] pl-[13px] tracking-[1px]';
  if (k.startsWith('SCOREP')) return 'w-[312px] pl-[13px] tracking-[0.9px]';
  if (k.startsWith('Score')) return 'w-[312px] pl-[3px] tracking-[0.1px]';
  return 'w-[312px] pl-[3px] tracking-[0.3px]';
}

function ContextView() {
  return (
    <div className="flex h-[643px] flex-col">
      <div className="flex h-[22px] items-center">
        <Rule /><span className="px-[3px] pt-px text-[10px] leading-[12px]">Context View</span><Rule />
      </div>
      <div className="flex h-[26px] items-end">
        <svg width="14" height="12" viewBox="0 0 14 12" className="mb-[6px] ml-[5px]">
          <rect x=".5" y=".5" width="13" height="4" fill="#5fdc52" stroke="#9bd494" /><rect x=".5" y="7.500" width="13" height="4" fill="#2fc424" stroke="#8fcf88" />
        </svg>
        <div className="z-10 mb-[-1px] ml-[5px] flex h-[31px] w-[102px] items-center gap-[6px] rounded-t-[3px] border border-b-0 border-[#a9a5a1] bg-gradient-to-b from-white to-[#fbfaf8] pl-[11px] text-[11.500px]">
          <span className="tracking-[0.150px]">Trace Info</span>
          <svg width="13" height="12" viewBox="0 0 13 12"><path d="M2 1c4 3 7 7 9 10" stroke="#222" strokeWidth="2.600" fill="none" /><path d="M11.500 1C8 4 4 8 1 11" stroke="#222" strokeWidth="1.700" fill="none" /></svg>
        </div>
        <div className="grow" />
        <svg width="16" height="14" viewBox="0 0 16 14" className="mb-[5px] mr-[4px]"><path d="M8 0v14M0 7h16" stroke="#4fd048" strokeWidth="3.500" /></svg>
      </div>
      <div className="flex min-h-0 grow border border-[#a9a5a1] bg-white">
        <div className="flex min-w-0 grow flex-col overflow-hidden text-[11.500px]">
          <div className="flex h-[19px] shrink-0 items-center border-b border-[#a9a5a1] bg-gradient-to-b from-[#fcfbfa] to-[#ece9e5] tracking-[0.3px]">
            <span className="flex h-[17px] w-[310px] items-center border-r border-[#c5c1bd] pl-[3px]">Property</span><span className="pl-[3px]">Value</span>
          </div>
          <div className="flex flex-col pt-px">
            {PROPS.map(([k, v]) => (
              <div key={k} className="flex h-[21px] shrink-0 items-center whitespace-nowrap">
                <span className={keyClass(k)}>{k}</span>
                <span className={v.startsWith('/') ? 'tracking-[0.150px]' : 'tracking-[0.300px]'}>{v}</span>
              </div>
            ))}
          </div>
        </div>
        <VScroll height="h-full" thumb="h-[276px]" />
      </div>
    </div>
  );
}

function TaskBar() {
  return (
    <div className="flex h-[25px] shrink-0 items-center bg-gradient-to-b from-[#1d2527] to-[#1f3640] text-[13px] tracking-[-0.15px] text-[#a9adae] whitespace-nowrap">
      <div className="ml-[3px] w-[33px]"><MouseLogo /></div>
      <svg width="20" height="16" viewBox="0 0 20 16"><rect width="20" height="16" fill="#3c5260" /><rect x="3" y="2" width="14" height="9" fill="#5f8aa8" /><path d="M0 1.500h20M0 13h20" stroke="#6a8590" /></svg>
      <svg width="4" height="10" viewBox="0 0 4 10" className="mx-[4px]"><path d="M0 1h4M0 5h4M0 9h4" stroke="#444" /></svg>
      <svg width="13" height="16" viewBox="0 0 13 16" className="ml-[4px] mr-[7px]"><rect width="13" height="16" fill="#e8e8e6" /><path d="M3 3h7M3 6h7M3 8h7M3 10h5" stroke="#bbb" /></svg>
      <span className="w-[178px] tracking-[-0.3px]">assignment3.pdf</span>
      <svg width="16" height="16" viewBox="0 0 16 16" className="mr-[6px]"><circle cx="8" cy="8" r="7.500" fill="#d8561c" /><circle cx="8.500" cy="6.500" r="4.200" fill="#2b5fa8" /><path d="M1 4c3-1 4 2 7 3-1 3 2 4 4 2-1 5-9 5-11-1z" fill="#f09a2a" /></svg>
      <span className="w-[178px] tracking-[-0.3px]">Programming_Of_Superco...</span>
      <div className="w-[22px]"><svg viewBox="0 0 19 15" className="h-[13px] w-4"><path d="M1 1h7l1 2h9v11H1z" fill="#ddd" /><rect x="1" y="4" width="17" height="10" fill="#8ab6d8" /></svg></div>
      <span className="w-[175px] tracking-[-0.4px]">figures - File Manager</span>
      <div className="flex h-[22px] w-[198px] items-center rounded-[2px] border border-[#3f6fa8] bg-gradient-to-b from-[#2d5284] to-[#2f5d93] pl-[3px] text-white">
        <Owl className="mr-[6px] h-[14px] w-[16px]" /><span className="tracking-[-0.2px]">Trace View - /home/hpc/h0...</span>
      </div>
      <svg width="15" height="16" viewBox="0 0 15 16" className="ml-[6px] mr-[6px]"><circle cx="7.500" cy="8" r="7" fill="#58b582" /><ellipse cx="7.500" cy="8" rx="6" ry="2.500" fill="none" stroke="#c6eed6" /><ellipse cx="7.500" cy="8" rx="2.500" ry="6" fill="none" stroke="#c6eed6" /></svg>
      <span className="w-[178px] tracking-[-0.250px]">untitled — /u/halle/agarwa...</span>
      <TermIcon />
      <span className="ml-[5px] grow tracking-[-0.3px]">Terminal - h039y39@login0...</span>
      <svg width="14" height="19" viewBox="0 0 14 19" className="mr-[5px]"><path d="M1 2h12l-1 16H2z" fill="#999" /><ellipse cx="7" cy="2.500" rx="6.500" ry="2" fill="#ccc" stroke="#777" strokeWidth=".6" /><path d="M4 5.500v11M7 5.500v11M10 5.500v11" stroke="#ddd" /></svg>
    </div>
  );
}

export default function App() {
  return (
    <div className="flex h-[1440px] w-[2560px] flex-col overflow-hidden bg-[#efebe7] font-['Noto_Sans',sans-serif] text-black">
      <Gradients />
      <TopPanel />
      <TitleBar />
      <MenuBar />
      <Toolbar />
      <div className="flex h-[1285px] shrink-0">
        <LeftDock />
        <div className="flex w-[1065px] flex-col">
          <div className="flex h-[13px] items-center">
            <Rule /><span className="px-[3px] pt-[1px] text-[10px] leading-[12px]">Function Summary</span><Rule />
          </div>
          <FunctionSummary />
          <ContextView />
        </div>
      </div>
      <div className="h-[19px] shrink-0 pl-[6px] text-[11.500px] leading-[19px] tracking-[0.3px]">1.1723 s</div>
      <TaskBar />
    </div>
  );
}
